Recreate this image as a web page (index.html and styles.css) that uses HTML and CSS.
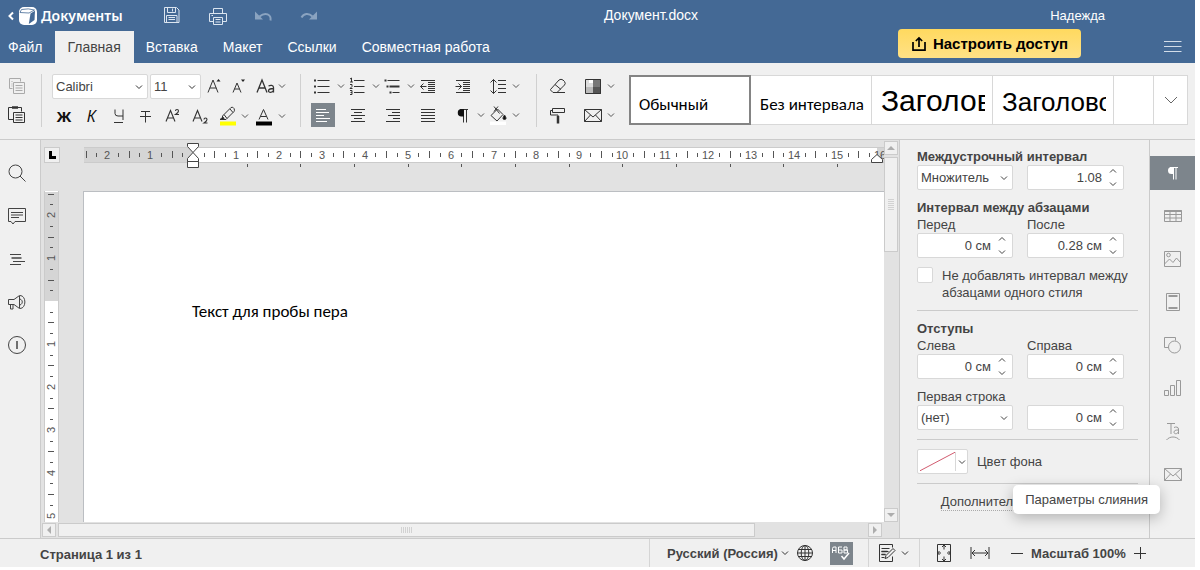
FILE: index.html
```html
<!DOCTYPE html>
<html lang="ru">
<head>
<meta charset="utf-8">
<meta name="viewport" content="width=device-width, initial-scale=1">
<title>Документ.docx</title>
<link rel="stylesheet" href="styles.css">
<script src="rulers.js" defer></script>
</head>
<body>
<svg class="sprite" aria-hidden="true">
  <symbol id="chev" viewBox="0 0 8 8"><path d="M1 2.5 4 5.5 7 2.5"/></symbol>
  <symbol id="chev-up" viewBox="0 0 8 8"><path d="M1 5.5 4 2.5 7 5.5"/></symbol>
  <symbol id="mail" viewBox="0 0 20 20"><path d="M1.5 4.5h17v12h-17zM1.5 4.5l8.500 7.500 8.500-7.500M1.500 16.500l6-6.500M18.500 16.500l-6-6.500"/></symbol>
</svg>

<header class="header">
  <div class="header-main">
    <div class="header-top">
      <a class="brand" href="#">
        <svg class="ico" width="30" height="20" viewBox="0 0 30 20"><path d="M6 6.500 2.500 10 6 13.500" stroke="#fff" stroke-width="2"/><rect x="12" y="1" width="18" height="18" rx="5" fill="#fff" stroke="none"/><path d="M13 6.500 22 7 27.500 4M13 6.500l1.500-3q7-1.500 13 .5" stroke="#446995" stroke-width=".8"/><path d="M23.500 7.500 28 4.800 27.500 14 21.800 18z" fill="#446995" stroke="none"/></svg>
        <span>Документы</span>
      </a>
      <div class="quick">
        <button aria-label="Сохранить"><svg class="ico" width="20" height="20" viewBox="0 0 20 20"><path d="M2.500 1.500h12l2.500 2.500v12.500H2.500zM5.500 1.500v5h8v-5M10.500 2.500v3M4.500 16.500v-7h10.500v7M6.500 11.500h6.500M6.500 13.500h6.500"/></svg></button>
        <button aria-label="Печать"><svg class="ico" width="20" height="20" viewBox="0 0 20 20"><path d="M5.500 7.500v-5h9v5M5.500 15.500h-4v-8h17v8h-4M5.500 11.500h9v7h-9zM7.500 13.500h5M7.500 16h5M3.500 9.500h1.500"/></svg></button>
        <button class="dim" aria-label="Отменить"><svg class="ico" width="20" height="20" viewBox="0 0 20 20"><path d="M16.500 14.500c1-6-5-9-11-4" stroke-width="2"/><path d="M1 5.500v8h8z" fill="currentColor" stroke="none"/></svg></button>
        <button class="dim" aria-label="Повторить"><svg class="ico" width="20" height="20" viewBox="0 0 20 20"><path d="M1.500 11.500c2-4 7-5 11-1" stroke-width="2"/><path d="M17 5.500v8H9z" fill="currentColor" stroke="none"/></svg></button>
      </div>
      <div class="doc-title">Документ.docx</div>
    </div>
    <nav class="tabs">
      <button>Файл</button>
      <button class="active">Главная</button>
      <button>Вставка</button>
      <button>Макет</button>
      <button>Ссылки</button>
      <button>Совместная работа</button>
    </nav>
  </div>
  <div class="header-side">
    <div class="user">Надежда</div>
    <div class="side-actions">
      <button class="share"><svg class="ico" width="16" height="16" viewBox="0 0 16 16"><path d="M2 6v8.200h12V6M8 11V2.500M4.800 5 8 2l3.200 3" stroke-width="1.700"/></svg>Настроить доступ</button>
      <button class="burger" aria-label="Меню"><svg class="ico" width="18" height="14" viewBox="0 0 18 14"><path d="M0 2.500h17.500M0 7.500h17.500M0 12.500h17.500"/></svg></button>
    </div>
  </div>
</header>

<div class="toolbar">
  <div class="group clip">
    <button class="tb dim" aria-label="Копировать"><svg class="ico" width="20" height="20" viewBox="0 0 20 20"><path d="M5.500 12.500h-3v-10h11v3M4.500 5.500h1M4.500 8h1M4.500 10h1M6.500 6.500h11v11h-11zM8.500 9.500h7M8.500 12h7M8.500 14.500h7"/></svg></button>
    <button class="tb" aria-label="Вставить"><svg class="ico" width="20" height="20" viewBox="0 0 20 20"><path d="M6.500 14.500h-5v-12h13v4M6.500 7.500h11v10h-11zM8.500 10h7M8.500 12.500h7M8.500 15h7"/><path d="M5 2.500h6" stroke-width="2.500"/></svg></button>
  </div>
  <div class="group font-group">
    <div class="row">
      <span class="select font-name"><select aria-label="Шрифт"><option>Calibri</option></select><svg class="ico" width="8" height="8"><use href="#chev"/></svg></span>
      <span class="select font-size"><select aria-label="Размер шрифта"><option>11</option></select><svg class="ico" width="8" height="8"><use href="#chev"/></svg></span>
      <div class="letters">
        <button class="tb" aria-label="Увеличить размер"><svg class="ico" width="20" height="20" viewBox="0 0 20 20"><path d="M3 16.500 8 4l5 12.500M4.800 12h6.400"/><path d="M11.500 5.500 13.500 3l2 2.500z" fill="#222" stroke="none"/></svg></button>
        <button class="tb" aria-label="Уменьшить размер"><svg class="ico" width="20" height="20" viewBox="0 0 20 20"><path d="M4 16.500 8 7l4 9.500M5.500 13h5"/><path d="M12 3.500h4l-2 2.500z" fill="#222" stroke="none"/></svg></button>
        <button class="tb" aria-label="Регистр"><svg class="ico" width="22" height="20" viewBox="0 0 22 20"><path d="M3 16.500 8 4l5 12.500M4.800 12h6.400M14.500 10c2-1 5-1 5 1.500v5M19.500 12.500c-3 0-5 .5-5 2.300 0 2.200 4 2 5-.3" stroke-width="1.300"/></svg></button>
        <button class="arrow" aria-label="Варианты регистра"><svg class="ico" width="8" height="8"><use href="#chev"/></svg></button>
      </div>
    </div>
    <div class="row styles-row">
      <div class="formats">
        <button class="tb glyph bold" aria-label="Полужирный">Ж</button>
        <button class="tb glyph italic" aria-label="Курсив">К</button>
        <button class="tb" aria-label="Подчёркнутый"><svg class="ico" width="20" height="20" viewBox="0 0 20 20"><path d="M6 3.500v4q0 2.500 3 2.500h5M14 3.500v10.500M5 16.500h9"/></svg></button>
        <button class="tb" aria-label="Зачёркнутый"><svg class="ico" width="20" height="20" viewBox="0 0 20 20"><path d="M5 5.500h9M9.500 5.500v11M4 10.500h11"/></svg></button>
        <button class="tb" aria-label="Надстрочный"><svg class="ico" width="20" height="20" viewBox="0 0 20 20"><path d="M3 15.500 7.500 4.500 12 15.500M4.500 12h6M12.500 5q0-1.500 1.500-1.500t1.500 1.500-3 3.500H16" stroke-width="1.100"/></svg></button>
        <button class="tb" aria-label="Подстрочный"><svg class="ico" width="20" height="20" viewBox="0 0 20 20"><path d="M2 15.500 6.500 4.500 11 15.500M3.500 12h6M13 13.500q0-1.500 1.500-1.500t1.500 1.500-3 3.500h3.500" stroke-width="1.100"/></svg></button>
        <button class="tb" aria-label="Цвет выделения"><svg class="ico" width="22" height="22" viewBox="0 0 22 22"><path d="M7 9.500 14 2.500q2-1 3 1t0 3L10 13.500zM7 9.500 5.500 11v3.500H9l1-1M13 4l3 3.500"/><path d="M3 14.500 6 12l1.500 2.500z" fill="#222"/><path d="M3 18.500h16" stroke="#ff0" stroke-width="4"/></svg></button>
      </div>
      <button class="arrow" aria-label="Палитра выделения"><svg class="ico" width="8" height="8"><use href="#chev"/></svg></button>
      <button class="tb" aria-label="Цвет шрифта"><svg class="ico" width="22" height="22" viewBox="0 0 22 22"><path d="M6 14.500 10.500 4.500 15 14.500M7.500 11.500h6"/><path d="M3 18.500h16" stroke="#000" stroke-width="4"/></svg></button>
      <button class="arrow" aria-label="Палитра шрифта"><svg class="ico" width="8" height="8"><use href="#chev"/></svg></button>
    </div>
  </div>
  <div class="group para-group">
    <div class="cell"><button class="tb" aria-label="Маркеры"><svg class="ico" width="20" height="20" viewBox="0 0 20 20"><path d="M4.500 4.500h12M4.500 10.500h12M4.500 16.500h12"/><path d="M1 4.500h2M1 10.500h2M1 16.500h2" stroke-width="2"/></svg></button><button class="arrow" aria-label="Виды маркеров"><svg class="ico" width="8" height="8"><use href="#chev"/></svg></button></div>
    <div class="cell"><button class="tb" aria-label="Нумерация"><svg class="ico" width="20" height="20" viewBox="0 0 20 20"><path d="M6 4.500h10.500M6 10.500h10.500M6 16.500h10.500M2 3l1.500-1v4M2 6h3M2 8.500h2v2l-2 2h2.500M2 14.500h2v4H2M2.500 16.500H4"/></svg></button><button class="arrow" aria-label="Виды нумерации"><svg class="ico" width="8" height="8"><use href="#chev"/></svg></button></div>
    <div class="cell"><button class="tb" aria-label="Многоуровневый список"><svg class="ico" width="20" height="20" viewBox="0 0 20 20"><path d="M4.500 4.500h12M9.500 16.500h7"/><path d="M1.500 4.500h2M6.500 16.500h2M3.500 10.500h2M6.500 10.500h10" stroke-width="2"/></svg></button><button class="arrow" aria-label="Виды списков"><svg class="ico" width="8" height="8"><use href="#chev"/></svg></button></div>
    <div class="cell"><button class="tb" aria-label="Уменьшить отступ"><svg class="ico" width="20" height="20" viewBox="0 0 20 20"><path d="M3 4.500h14M10 6.500h7M10 8.500h7M10 10.500h7M10 12.500h7M10 14.500h7M3 16.500h14M2.500 10.500h6M5.500 7.500l-3 3 3 3"/></svg></button></div>
    <div class="cell"><button class="tb" aria-label="Увеличить отступ"><svg class="ico" width="20" height="20" viewBox="0 0 20 20"><path d="M3 4.500h14M10 6.500h7M10 8.500h7M10 10.500h7M10 12.500h7M10 14.500h7M3 16.500h14M2.500 10.500h6M5.500 7.500l3 3-3 3"/></svg></button></div>
    <div class="cell"><button class="tb" aria-label="Междустрочный интервал"><svg class="ico" width="20" height="20" viewBox="0 0 20 20"><path d="M5.500 3.500v14M2.500 6.500l3-3 3 3M2.500 14.500l3 3 3-3M10 4.500h8M10 8.500h8M10 12.500h8M10 16.500h8"/></svg></button><button class="arrow" aria-label="Интервалы"><svg class="ico" width="8" height="8"><use href="#chev"/></svg></button></div>
    <div class="cell"><button class="tb on" aria-label="По левому краю"><svg class="ico" width="20" height="20" viewBox="0 0 20 20"><path d="M3 4.500h10M3 7.500h13M3 10.500h8M3 13.500h14M3 16.500h11"/></svg></button></div>
    <div class="cell"><button class="tb" aria-label="По центру"><svg class="ico" width="20" height="20" viewBox="0 0 20 20"><path d="M3 4.500h14M6 7.500h8M3 10.500h14M6 13.500h8M3 16.500h14"/></svg></button></div>
    <div class="cell"><button class="tb" aria-label="По правому краю"><svg class="ico" width="20" height="20" viewBox="0 0 20 20"><path d="M3 4.500h14M9 7.500h8M5 10.500h12M10 13.500h7M3 16.500h14"/></svg></button></div>
    <div class="cell"><button class="tb" aria-label="По ширине"><svg class="ico" width="20" height="20" viewBox="0 0 20 20"><path d="M3 4.500h14M3 7.500h14M3 10.500h14M3 13.500h14M3 16.500h14"/></svg></button></div>
    <div class="cell"><button class="tb" aria-label="Непечатаемые символы"><svg class="ico" width="20" height="20" viewBox="0 0 20 20"><path d="M10.500 4v13.500M13.500 4v13.500M7 4.500h8"/><path d="M11 4H8.500a3.700 3.700 0 0 0 0 7.500H11z" fill="#111" stroke="none"/></svg></button><button class="arrow" aria-label="Символы"><svg class="ico" width="8" height="8"><use href="#chev"/></svg></button></div>
    <div class="cell"><button class="tb" aria-label="Заливка"><svg class="ico" width="20" height="22" viewBox="0 0 20 22"><path d="M2 17.500h16V21H2z" fill="#fff" stroke="none"/><path d="M3 11.500 9.500 5l5.500 5.500-6 6.500zM6 2.500l5.500 7M10 2.500l-4 5"/><path d="M16.500 11c2.500 3.500 1.500 4.500 0 4.500s-2.500-1 0-4.500z" fill="#111"/></svg></button><button class="arrow" aria-label="Цвета заливки"><svg class="ico" width="8" height="8"><use href="#chev"/></svg></button></div>
  </div>
  <div class="group extra-group">
    <div class="cell"><button class="tb" aria-label="Очистить стиль"><svg class="ico" width="20" height="20" viewBox="0 0 20 20"><path d="M2.500 13.500 11 4q2-1.500 4 0l1.500 1.500q1.500 2 0 3.500L9 16.500H5L2.500 14zM7 8.500l6 5M9 16.500h8"/></svg></button></div>
    <div class="cell"><button class="tb" aria-label="Цветовая схема"><svg class="ico" width="20" height="20" viewBox="0 0 20 20"><path d="M2 3h8v8H2z" fill="#ddd" stroke="none"/><path d="M6 3h4v4H6z" fill="#fff" stroke="none"/><path d="M10 3h8v8h-8z" fill="#777" stroke="none"/><path d="M2 11h8v7H2z" fill="#bbb" stroke="none"/><path d="M10 11h8v7h-8z" fill="#555" stroke="none"/><path d="M2.500 3.500h15v14h-15z"/></svg></button><button class="arrow" aria-label="Схемы"><svg class="ico" width="8" height="8"><use href="#chev"/></svg></button></div>
    <div class="cell"><button class="tb" aria-label="Формат по образцу"><svg class="ico" width="20" height="20" viewBox="0 0 20 20"><path d="M4.500 3.500h12v4h-12zM4.500 5.500h-2v4.500h7.500v2"/><path d="M10 11v7.500" stroke-width="2.500"/></svg></button></div>
    <div class="cell"><button class="tb" aria-label="Слияние"><svg class="ico" width="20" height="20"><use href="#mail"/></svg></button><button class="arrow" aria-label="Слияние: параметры"><svg class="ico" width="8" height="8"><use href="#chev"/></svg></button></div>
  </div>
  <div class="gallery">
    <button class="style picked">Обычный</button>
    <button class="style">Без интервала</button>
    <button class="style h1"><span>Заголовок</span></button>
    <button class="style h2"><span>Заголовок</span></button>
    <span class="style blank"></span>
    <button class="style more" aria-label="Все стили"><svg class="ico" width="14" height="10" viewBox="0 0 14 10"><path d="M1 2l6 6 6-6"/></svg></button>
  </div>
</div>

<main class="main">
  <aside class="left-bar">
    <button aria-label="Поиск"><svg class="ico" width="20" height="20" viewBox="0 0 20 20"><circle cx="8.500" cy="8.500" r="6.500"/><path d="M13 13l5.500 5.500"/></svg></button>
    <button aria-label="Комментарии"><svg class="ico" width="20" height="20" viewBox="0 0 20 20"><path d="M1.500 2.500h17v13H8l-2 2.500-2-2.500H1.500zM4 6.500h12M4 9h12M4 11.500h8"/></svg></button>
    <button aria-label="Навигация"><svg class="ico" width="20" height="20" viewBox="0 0 20 20"><path d="M3 5.500h11M6 12.500h12M3 15.500h11"/><path d="M4.500 9h10" stroke-width="1.500"/></svg></button>
    <button aria-label="Обратная связь"><svg class="ico" width="20" height="20" viewBox="0 0 20 20"><path d="M1.500 7.500H7l5.500-4v13L7 12.500H1.500zM3.500 12.500V17H6v-4.500M13 3.500c6.500 0 6.500 13 0 13M13 7c3 1 3 5 0 6"/></svg></button>
    <button aria-label="О программе"><svg class="ico" width="20" height="20" viewBox="0 0 20 20"><circle cx="10" cy="10" r="8.500"/><path d="M10 6v8" stroke-width="1.500"/></svg></button>
  </aside>

  <section class="editor">
    <div class="corner"><button aria-label="Тип табуляции"><svg class="ico" width="14" height="14" viewBox="0 0 14 14"><path d="M5.500 3v6.500H11" stroke="#000" stroke-width="3"/></svg></button></div>
    <svg class="ruler-h" id="ruler-h" aria-hidden="true"></svg>
    <svg class="ruler-v" id="ruler-v" aria-hidden="true"></svg>
    <article class="page" contenteditable="true" spellcheck="false"><p>Текст для пробы пера</p></article>
    <div class="scroll-v">
      <button aria-label="Вверх"><svg width="8" height="8" viewBox="0 0 8 8"><path d="M0 6h8L4 2z"/></svg></button>
      <div class="thumb"><svg width="6" height="12" viewBox="0 0 6 12"><path d="M0 0h6v1H0zM0 2h6v1H0zM0 4h6v1H0zM0 6h6v1H0zM0 8h6v1H0zM0 10h6v1H0z"/></svg></div>
      <button class="end" aria-label="Вниз"><svg width="8" height="8" viewBox="0 0 8 8"><path d="M0 2h8L4 6z"/></svg></button>
    </div>
    <div class="scroll-h">
      <button aria-label="Влево"><svg width="8" height="8" viewBox="0 0 8 8"><path d="M6 0v8L2 4z"/></svg></button>
      <div class="thumb"><svg width="12" height="6" viewBox="0 0 12 6"><path d="M0 0h1v6H0zM2 0h1v6H2zM4 0h1v6H4zM6 0h1v6H6zM8 0h1v6H8zM10 0h1v6h-1z"/></svg></div>
      <button class="end" aria-label="Вправо"><svg width="8" height="8" viewBox="0 0 8 8"><path d="M2 0v8l4-4z"/></svg></button>
    </div>
  </section>

  <aside class="panel">
    <div class="form">
      <h2>Междустрочный интервал</h2>
      <div class="pair">
        <span class="select"><select aria-label="Тип интервала"><option>Множитель</option></select><svg class="ico" width="8" height="8"><use href="#chev"/></svg></span>
        <span class="spin"><input type="text" value="1.08" aria-label="Значение интервала"><span class="steps"><button aria-label="Больше"><svg class="ico" width="8" height="8"><use href="#chev-up"/></svg></button><button aria-label="Меньше"><svg class="ico" width="8" height="8"><use href="#chev"/></svg></button></span></span>
      </div>
      <h2 class="next">Интервал между абзацами</h2>
      <div class="pair">
        <label for="before">Перед</label><label for="after">После</label>
        <span class="spin"><input id="before" type="text" value="0 см"><span class="steps"><button aria-label="Больше"><svg class="ico" width="8" height="8"><use href="#chev-up"/></svg></button><button aria-label="Меньше"><svg class="ico" width="8" height="8"><use href="#chev"/></svg></button></span></span>
        <span class="spin"><input id="after" type="text" value="0.28 см"><span class="steps"><button aria-label="Больше"><svg class="ico" width="8" height="8"><use href="#chev-up"/></svg></button><button aria-label="Меньше"><svg class="ico" width="8" height="8"><use href="#chev"/></svg></button></span></span>
      </div>
      <label class="check next"><input type="checkbox"><span>Не добавлять интервал между абзацами одного стиля</span></label>
      <hr>
      <h2>Отступы</h2>
      <div class="pair">
        <label for="left">Слева</label><label for="right">Справа</label>
        <span class="spin"><input id="left" type="text" value="0 см"><span class="steps"><button aria-label="Больше"><svg class="ico" width="8" height="8"><use href="#chev-up"/></svg></button><button aria-label="Меньше"><svg class="ico" width="8" height="8"><use href="#chev"/></svg></button></span></span>
        <span class="spin"><input id="right" type="text" value="0 см"><span class="steps"><button aria-label="Больше"><svg class="ico" width="8" height="8"><use href="#chev-up"/></svg></button><button aria-label="Меньше"><svg class="ico" width="8" height="8"><use href="#chev"/></svg></button></span></span>
      </div>
      <div class="pair next">
        <label class="wide" for="first">Первая строка</label>
        <span class="select"><select id="first"><option>(нет)</option></select><svg class="ico" width="8" height="8"><use href="#chev"/></svg></span>
        <span class="spin"><input type="text" value="0 см" aria-label="Отступ первой строки"><span class="steps"><button aria-label="Больше"><svg class="ico" width="8" height="8"><use href="#chev-up"/></svg></button><button aria-label="Меньше"><svg class="ico" width="8" height="8"><use href="#chev"/></svg></button></span></span>
      </div>
      <hr>
      <div class="fill">
        <button id="fill" class="swatch" aria-label="Цвет фона"><svg width="36" height="19" viewBox="0 0 36 19"><path d="M0 19 36 0" stroke="#d0566a" fill="none"/></svg><svg class="ico" width="8" height="8"><use href="#chev"/></svg></button>
        <label for="fill">Цвет фона</label>
      </div>
      <hr>
      <a class="advanced" href="#">Дополнительные параметры</a>
    </div>
    <div class="tooltip" role="tooltip">Параметры слияния</div>
  </aside>

  <nav class="right-bar">
    <button class="on" aria-label="Параметры абзаца"><svg class="ico" width="20" height="20" viewBox="0 0 20 20"><path d="M10.500 4v12.500M13 4v12.500M7 4.500h8"/><path d="M11 4H8.500a3.500 3.500 0 0 0 0 7H11z" fill="#fff" stroke="none"/></svg></button>
    <button aria-label="Параметры таблицы"><svg class="ico" width="20" height="20" viewBox="0 0 20 20"><path d="M1.500 4.500h17v11h-17zM1.500 8.500h17M1.500 12h17M7 6v9.500M13 6v9.500"/><path d="M1.500 5h17" stroke-width="2"/></svg></button>
    <button aria-label="Параметры изображения"><svg class="ico" width="20" height="20" viewBox="0 0 20 20"><path d="M1.500 2.500h16v15h-16zM1.500 15l5-5 3.500 3.500 3.500-4.500 4 4.500"/><circle cx="5.500" cy="6" r="1.800"/></svg></button>
    <button aria-label="Параметры колонтитулов"><svg class="ico" width="20" height="20" viewBox="0 0 20 20"><path d="M3.500 1.500h13v17h-13z"/><path d="M5.500 4h9M5.500 16h9" stroke-width="2"/></svg></button>
    <button aria-label="Параметры фигуры"><svg class="ico" width="20" height="20" viewBox="0 0 20 20"><path d="M5.500 12.500h-4v-10h11v3"/><circle cx="11.500" cy="12" r="6"/></svg></button>
    <button aria-label="Параметры диаграммы"><svg class="ico" width="20" height="20" viewBox="0 0 20 20"><path d="M1.500 12.500h4v5h-4zM7.500 7.500h4v10h-4zM13.500 2.500h4v15h-4z"/></svg></button>
    <button aria-label="Параметры текста"><svg class="ico" width="20" height="20" viewBox="0 0 20 20"><path d="M4 2.500h8M8 2.500V13M11 6.500c2-1 4.500-.5 4.500 1.500v5M15.500 9c-3 0-4.500.5-4.500 2.200 0 2.300 4 2 4.500-.7M3.500 19c3-4 10-4 13 0"/></svg></button>
    <button aria-label="Параметры слияния"><svg class="ico" width="20" height="20"><use href="#mail"/></svg></button>
  </nav>
</main>

<footer class="status">
  <div class="pages">Страница 1 из 1</div>
  <div class="seg lang">
    <button class="lang-name">Русский (Россия)<svg class="ico" width="8" height="8"><use href="#chev"/></svg></button>
    <button aria-label="Язык документа"><svg class="ico" width="20" height="20" viewBox="0 0 20 20"><circle cx="10" cy="10" r="7.500"/><ellipse cx="10" cy="10" rx="3.800" ry="7.500"/><path d="M10 2.500v15M2.500 10h15M3.500 6.500h13M3.500 13.500h13"/></svg></button>
    <button class="spell" aria-label="Проверка орфографии"><svg class="ico" width="20" height="20" viewBox="0 0 20 20"><path d="M1.500 10V5.500q0-1.500 1.500-1.500h2v6M1.500 7.500H5M11 4H7.500v6H11V7H7.500M13 4h3v3h-3zM13 7h3.500v3H13z"/><path d="M10.500 13l2.500 3 5-6" stroke-width="1.500"/></svg></button>
  </div>
  <div class="seg review">
    <button aria-label="Отслеживание изменений"><svg class="ico" width="20" height="20" viewBox="0 0 20 20"><path d="M15.500 4.500v-3h-13v17h13v-5M4.500 5.500h8M4.500 8.500h7M4.500 11.500h4M4.500 14.500h3M9 12.500 16 5.500l2 2-7 7-3 1z"/><path d="M4.500 8.500h6M4.500 11.500h4" stroke-width="1.500"/></svg></button>
    <button class="arrow" aria-label="Режимы"><svg class="ico" width="8" height="8"><use href="#chev"/></svg></button>
  </div>
  <div class="seg zoom">
    <button aria-label="По размеру страницы"><svg class="ico" width="20" height="20" viewBox="0 0 20 20"><path d="M3.500 1.500h13v17h-13zM10 1.500v5M10 13.500v5M3.500 10H7M13 10h3.500M8 4l2-2 2 2M8 16l2 2 2-2M5.500 8l-2 2 2 2M14.500 8l2 2-2 2"/></svg></button>
    <button aria-label="По ширине"><svg class="ico" width="20" height="20" viewBox="0 0 20 20"><path d="M1 4v12M19 4v12M2 10h16M5 7l-3 3 3 3M15 7l3 3-3 3"/></svg></button>
    <div class="scale">
      <button aria-label="Уменьшить"><svg class="ico" width="12" height="12" viewBox="0 0 12 12"><path d="M0 6.500h12"/></svg></button>
      <button>Масштаб 100%</button>
      <button aria-label="Увеличить"><svg class="ico" width="12" height="12" viewBox="0 0 12 12"><path d="M0 6.500h12M6.500 0v12"/></svg></button>
    </div>
  </div>
</footer>
</body>
</html>
```
FILE: styles.css
```css
* { box-sizing: border-box; }

body {
  margin: 0;
  padding: 0 5px 3px 0;
  height: 100vh;
  display: flex;
  flex-direction: column;
  background: #fff;
  color: #444;
  font: 13px/17px "Liberation Sans", Arial, sans-serif;
}

button {
  margin: 0;
  padding: 0;
  border: 0;
  background: none;
  color: inherit;
  font: inherit;
  display: flex;
  align-items: center;
  justify-content: center;
}

select, input { font: inherit; color: #444; }
h2 { margin: 0; font: bold 13px/17px "Liberation Sans", Arial, sans-serif; }
a { color: inherit; text-decoration: none; }

.sprite { display: none; }
.ico { fill: none; stroke: currentColor; stroke-width: 1; flex: none; }

/* Header */
.header { display: flex; background: #446995; color: #fff; flex: none; }
.header-main { flex: 1; display: flex; flex-direction: column; }
.header-top { height: 31px; display: flex; align-items: center; padding-left: 7px; }
.brand {
  display: flex;
  align-items: center;
  gap: 4px;
  width: 155px;
  font: 600 14px/20px "Noto Sans", "Open Sans", sans-serif;
}
.quick { display: flex; gap: 26px; }
.quick button { color: #dbe5f0; }
.quick .dim { color: #8aa3c0; }
.doc-title { flex: 1; padding-left: 84px; text-align: center; font-size: 14px; }
.tabs { height: 32px; display: flex; font-size: 14px; }
.tabs button { padding: 0 13px 0 12px; }
.tabs button:first-child { padding-left: 8px; }
.tabs .active { background: #f0f0f0; color: #444; }
.header-side { width: 297px; }
.user { height: 29px; padding: 7px 90px 0 0; text-align: right; }
.side-actions { display: flex; justify-content: space-between; padding-right: 13px; }
.share {
  height: 29px;
  width: 183px;
  gap: 6px;
  border-radius: 4px;
  background: linear-gradient(#ffd95f, #ffe186);
  color: #000;
  font-weight: bold;
  font-size: 15px;
}
.burger { height: 34px; color: #d3dde9; }

/* Toolbar */
.toolbar {
  flex: none;
  display: flex;
  height: 77px;
  padding: 11px 7px 0 0;
  background: #f0f0f0;
  border-bottom: 1px solid #cbcbcb;
  color: #333;
}
.group { flex: none; height: 53px; border-right: 1px solid #d0d0d0; }
.tb { width: 24px; height: 24px; flex: none; }
.tb.on { background: #7d858c; color: #fff; }
.arrow { width: 9px; height: 24px; color: #555; flex: none; }
.clip { width: 42px; padding-left: 5px; display: flex; flex-direction: column; gap: 5px; }
.clip .dim { color: #aaa; }
.font-group { width: 259px; padding-left: 10px; display: flex; flex-direction: column; gap: 5px; }
.row { display: flex; }
.row .letters { display: flex; margin-left: 2px; }
.letters .tb:nth-child(3) { margin-left: 2px; }
.formats { width: 188px; display: flex; justify-content: space-between; }
.styles-row .arrow + .tb { margin-left: 3px; }
.styles-row .arrow:last-child { margin-left: 1px; }
.glyph { font: 16px/24px "Noto Sans", sans-serif; color: #111; }
.glyph.bold { font-weight: bold; font-size: 15px; }
.glyph.italic { font-style: italic; }

.select { position: relative; display: block; flex: none; }
.select select {
  appearance: none;
  width: 100%;
  height: 25px;
  padding: 0 20px 0 3px;
  border: 1px solid #d8d8d8;
  border-radius: 2px;
  background: #fff;
}
.select .ico { position: absolute; right: 5px; top: 9px; pointer-events: none; }
.font-name { width: 96px; margin-right: 2px; }
.font-size { width: 51px; }

.para-group, .extra-group {
  display: grid;
  grid-template-columns: repeat(6, 35px);
  grid-auto-rows: 24px;
  row-gap: 5px;
}
.para-group { width: 236px; padding-left: 10px; }
.extra-group {
  width: 92px;
  padding-left: 9px;
  border: 0;
  grid-template-columns: repeat(2, 35px);
}
.cell { display: flex; }
.cell .arrow { margin-left: 1px; }

.gallery {
  flex: 1;
  min-width: 0;
  height: 50px;
  margin-top: 1px;
  display: grid;
  grid-template-columns: repeat(4, minmax(0, 1fr)) 40px 33px;
  border: 1px solid #d8d8d8;
  background: #fff;
  color: #000;
}
.style {
  height: 48px;
  padding: 9px 7px 0 9px;
  border-right: 1px solid #d8d8d8;
  justify-content: flex-start;
  overflow: hidden;
  white-space: nowrap;
  font: 17px/22px Carlito, Lato, sans-serif;
}
.picked { height: 50px; margin: -1px 0 0 -1px; padding-left: 8px; border: 2px solid #848484; }
.h1, .h2 { align-items: flex-start; padding-top: 5px; font: 30px/40px "Liberation Sans", sans-serif; }
.h2 { padding-top: 6px; font-size: 26px; }
.h1 span, .h2 span { overflow: hidden; }
.more { padding: 0; border: 0; justify-content: center; color: #666; }

/* Work area */
.main { flex: 1; min-height: 0; display: flex; background: #f0f0f0; }
.left-bar, .right-bar { flex: none; padding-top: 16px; display: flex; flex-direction: column; gap: 9px; }
.left-bar { width: 41px; border-right: 1px solid #cbcbcb; }
.left-bar button { width: 34px; height: 34px; }
.right-bar { width: 46px; border-left: 1px solid #cbcbcb; color: #999; }
.right-bar button { height: 34px; flex: none; }
.right-bar .on { background: #7d858c; color: #fff; }

.editor {
  flex: 1;
  min-width: 0;
  display: grid;
  grid-template-columns: 42px minmax(0, 1fr) 15px;
  grid-template-rows: 51px minmax(0, 1fr) 16px;
  background: #e2e2e2;
}
.corner { padding: 7px 0 0 3px; }
.corner button { width: 16px; height: 16px; border: 1px solid #cbcbcb; background: #f0f0f0; }
.ruler-h, .ruler-v { display: block; width: 100%; height: 100%; overflow: hidden; }
.page {
  grid-column: 2;
  grid-row: 2;
  padding: 109px 108px 0;
  border: solid #bbbec2;
  border-width: 1px 0 0 1px;
  background: #fff;
  color: #000;
  font: 17px/22px Carlito, Lato, sans-serif;
  outline: none;
  overflow: hidden;
}
.page p { margin: 0; }
.ruler-h { grid-column: 2; grid-row: 1; }
.ruler-v { grid-column: 1; grid-row: 2; }

.scroll-v, .scroll-h { display: flex; gap: 2px; }
.scroll-v { grid-column: 3; grid-row: 1 / 3; flex-direction: column; padding-top: 1px; }
.scroll-h { grid-column: 1 / 4; grid-row: 3; padding: 1px 17px 1px 1px; }
.scroll-v button, .scroll-h button { width: 14px; height: 14px; border: 1px solid #cbcbcb; background: #f0f0f0; flex: none; }
.scroll-v svg, .scroll-h svg { fill: #adadad; }
.thumb { display: flex; align-items: center; justify-content: center; border: 1px solid #cbcbcb; background: #f0f0f0; }
.scroll-v .thumb { width: 14px; height: 25%; }
.scroll-v .thumb svg, .scroll-h .thumb svg { fill: #d2d2d2; }
.scroll-h .thumb { width: 83%; }
.end { margin-top: auto; }
.scroll-h .end { margin: 0 0 0 auto; }

/* Settings panel */
.panel { position: relative; flex: none; width: 250px; border-left: 1px solid #cbcbcb; }
.form { padding: 8px 11px 0 17px; }
.next { margin-top: 9px; }
.pair { display: grid; grid-template-columns: 96px 97px; column-gap: 14px; }
.wide { grid-column: 1 / 3; }
.spin {
  display: flex;
  height: 25px;
  border: 1px solid #d8d8d8;
  border-radius: 2px;
  background: #fff;
}
.spin input { flex: 1; min-width: 0; padding: 0 1px 0 0; border: 0; background: none; text-align: right; outline: none; }
.steps { width: 20px; display: flex; flex-direction: column; justify-content: space-between; align-items: center; padding: 1px 0; }
.check { display: flex; gap: 9px; margin-right: -8px; }
.check input {
  appearance: none;
  flex: none;
  width: 16px;
  height: 16px;
  margin: 0;
  border: 1px solid #d8d8d8;
  border-radius: 2px;
  background: #fff;
}
.form hr { margin: 9px 0; border: 0; border-top: 1px solid #cbcbcb; }
.fill { display: flex; align-items: center; gap: 9px; }
.swatch { width: 51px; height: 25px; gap: 2px; border: 1px solid #d8d8d8; background: #fff; border-radius: 2px; }
.swatch svg:first-child { border-right: 1px solid #d8d8d8; }
.advanced { display: block; width: max-content; margin: 0 auto; border-bottom: 1px dotted #aaa; }
.tooltip {
  position: absolute;
  right: -11px;
  bottom: 24px;
  z-index: 2;
  padding: 6px 12px;
  border-radius: 5px;
  background: #fff;
  box-shadow: 0 4px 14px rgba(0, 0, 0, .25);
  white-space: nowrap;
}

/* Status bar */
.status {
  flex: none;
  height: 29px;
  display: flex;
  align-items: stretch;
  border-top: 1px solid #cbcbcb;
  background: #f0f0f0;
  font-weight: bold;
}
.status .ico { color: #333; }
.pages { flex: 1; padding: 7px 0 0 40px; }
.seg { display: flex; align-items: center; border-left: 1px solid #d5d5d5; }
.lang { width: 219px; padding-left: 17px; gap: 6px; }
.lang-name { gap: 3px; }
.spell { width: 23px; height: 23px; margin-left: 9px; background: #7d858c; }
.status .spell .ico { color: #fff; }
.review { width: 51px; padding-left: 8px; gap: 3px; }
.zoom { width: 276px; padding-left: 14px; gap: 16px; }
.scale { display: flex; gap: 8px; margin-left: 5px; }
```
FILE: rulers.js
```js
const NS = "http://www.w3.org/2000/svg";
const CM = 42.93;

function add(svg, name, attrs, text) {
  const node = document.createElementNS(NS, name);
  for (const key in attrs) node.setAttribute(key, attrs[key]);
  if (text) node.textContent = text;
  svg.appendChild(node);
}

function rect(svg, x, y, width, height, fill) {
  add(svg, "rect", { x, y, width, height, fill });
}

const font = { fill: "#555", "font-size": 11, "font-family": "Liberation Sans, Arial, sans-serif", "text-anchor": "middle" };

function drawHorizontal() {
  const svg = document.getElementById("ruler-h");
  const zero = 110;
  const end = 794;
  rect(svg, 1, 7, 2000, 16, "#cbcbcb");
  rect(svg, 1, 8, 2000, 14, "#d5d5d5");
  rect(svg, zero, 8, end - zero, 14, "#fff");
  for (let q = -10; q < 67; q++) {
    const x = Math.round(zero + q * CM / 4);
    if (q % 4 === 0) {
      if (q !== 0) add(svg, "text", { x, y: 19, ...font }, String(Math.abs(q / 4)));
    } else if (q % 2 === 0) {
      rect(svg, x, 11, 1, 7, "#555");
    } else {
      rect(svg, x, 13, 1, 4, "#555");
    }
    if (q > 0 && q % 5 === 0 && x < end) rect(svg, x, 24, 1, 3, "#555");
  }
  const mark = { fill: "#fff", stroke: "#444" };
  add(svg, "path", { d: "M104.500 3.500h11v3l-5.500 6-5.500-6zM104.500 18.500l5.500-6 5.500 6v3h-11zM104.500 21.500h11v6h-11z", ...mark });
  add(svg, "path", { d: "M788.500 22.500v-3l5.500-5 5.500 5v3z", ...mark });
}

function drawVertical() {
  const svg = document.getElementById("ruler-v");
  const zero = 110;
  rect(svg, 3, 0, 15, 2000, "#cbcbcb");
  rect(svg, 4, 0, 13, 2000, "#fff");
  rect(svg, 4, 1, 13, zero - 1, "#d5d5d5");
  for (let q = -10; q < 30; q++) {
    const y = Math.round(zero + q * CM / 4);
    if (q % 4 === 0) {
      if (q !== 0) add(svg, "text", { x: 0, y: 0, transform: `translate(14 ${y}) rotate(-90)`, ...font }, String(Math.abs(q / 4)));
    } else if (q % 2 === 0) {
      rect(svg, 7, y, 6, 1, "#555");
    } else {
      rect(svg, 9, y, 3, 1, "#555");
    }
  }
}

drawHorizontal();
drawVertical();
```
